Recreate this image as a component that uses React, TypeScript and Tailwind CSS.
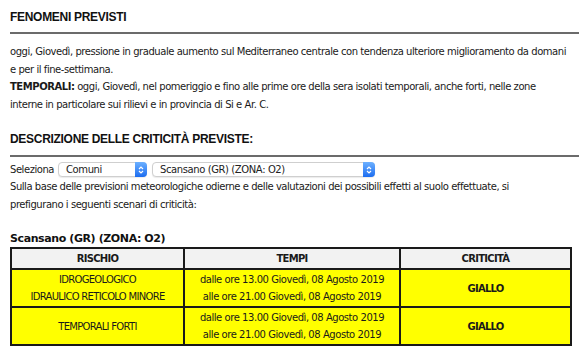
import React from "react";

const body = { fontFamily: '"DejaVu Sans", Verdana, sans-serif' };
const head = { fontFamily: '"Liberation Sans", Arial, sans-serif' };

function FakeSelect({ label, width }: { label: string; width: string }) {
  return (
    <div
      className={`flex h-[15px] items-center justify-between rounded-[4px] border border-[#cfcfcf] bg-white pl-[7px] shadow-[0_1px_1px_rgba(0,0,0,0.08)] ${width}`}
    >
      <span className="text-[10px] leading-none tracking-[-0.4px] text-[#222]">{label}</span>
      <span className="-mr-px flex h-[15px] w-[12px] items-center justify-center rounded-r-[4px] bg-gradient-to-b from-[#6cb0ff] to-[#1a6cf0]">
        <svg width="6" height="10" viewBox="0 0 6 10" fill="none" stroke="white" strokeWidth="1.2">
          <path d="M1 4 L3 2 L5 4" />
          <path d="M1 6 L3 8 L5 6" />
        </svg>
      </span>
    </div>
  );
}

const rows = [
  {
    rischio: ["IDROGEOLOGICO", "IDRAULICO RETICOLO MINORE"],
    tempi: ["dalle ore 13.00 Giovedì, 08 Agosto 2019", "alle ore 21.00 Giovedì, 08 Agosto 2019"],
    criticita: "GIALLO",
  },
  {
    rischio: ["TEMPORALI FORTI"],
    tempi: ["dalle ore 13.00 Giovedì, 08 Agosto 2019", "alle ore 21.00 Giovedì, 08 Agosto 2019"],
    criticita: "GIALLO",
  },
];

export default function App() {
  return (
    <div className="h-[350px] w-[579px] overflow-hidden bg-white pl-[10px] text-[#1a1a1a]" style={body}>
      <h2 className="pt-[9px] text-[12px] font-bold leading-[16px] tracking-[-0.3px] text-[#111]" style={head}>
        FENOMENI PREVISTI
      </h2>
      <div className="mt-[7px] h-[2px] bg-[#6b6b6b]" />
      <div className="mt-[9px] whitespace-nowrap text-[10px] leading-[17.5px] tracking-[-0.45px]">
        <p>
          oggi, Giovedì, pressione in graduale aumento sul Mediterraneo centrale con tendenza ulteriore miglioramento da domani
          <br />e per il fine-settimana.
        </p>
        <p>
          <b>TEMPORALI:</b> oggi, Giovedì, nel pomeriggio e fino alle prime ore della sera isolati temporali, anche forti, nelle zone
          <br />
          interne in particolare sui rilievi e in provincia di Si e Ar. C.
        </p>
      </div>

      <h2 className="mt-[18px] text-[12px] font-bold leading-[16px] tracking-[-0.3px] text-[#111]" style={head}>
        DESCRIZIONE DELLE CRITICITÀ PREVISTE:
      </h2>
      <div className="mt-[8px] h-[2px] bg-[#6b6b6b]" />
      <div className="mt-[5px] flex items-center text-[10px] tracking-[-0.45px]">
        <span>Seleziona</span>
        <FakeSelect label="Comuni" width="ml-[4px] w-[89px]" />
        <FakeSelect label="Scansano (GR) (ZONA: O2)" width="ml-[5px] w-[223px]" />
      </div>
      <p className="mt-px whitespace-nowrap text-[10px] leading-[17.5px] tracking-[-0.45px]">
        Sulla base delle previsioni meteorologiche odierne e delle valutazioni dei possibili effetti al suolo effettuate, si
        <br />
        prefigurano i seguenti scenari di criticità:
      </p>

      <h3 className="mt-[19px] text-[11px] font-bold leading-[14px] tracking-[-0.4px] text-[#111]">Scansano (GR) (ZONA: O2)</h3>
      <table className="mt-px w-[562px] border-collapse border-2 border-[#1a1a1a] text-center text-[10px] tracking-[-0.45px]">
        <thead>
          <tr className="bg-[#f2f2f2]">
            <th className="h-[21px] w-[173px] border-2 border-[#1a1a1a] p-0 font-bold tracking-[-0.7px]">RISCHIO</th>
            <th className="w-[216px] border-2 border-[#1a1a1a] p-0 font-bold tracking-[-0.7px]">TEMPI</th>
            <th className="border-2 border-[#1a1a1a] p-0 font-bold tracking-[-0.7px]">CRITICITÀ</th>
          </tr>
        </thead>
        <tbody>
          {rows.map((r, i) => (
            <tr key={i} className="bg-[#ffff00]">
              <td className="h-[38px] border-2 border-[#1a1a1a] p-0 leading-[17px] tracking-[-0.7px]">
                {r.rischio.map((t) => (
                  <div key={t}>{t}</div>
                ))}
              </td>
              <td className="border-2 border-[#1a1a1a] p-0 leading-[17px]">
                {r.tempi.map((t) => (
                  <div key={t}>{t}</div>
                ))}
              </td>
              <td className="border-2 border-[#1a1a1a] p-0 font-bold tracking-[-0.8px]">{r.criticita}</td>
            </tr>
          ))}
        </tbody>
      </table>
    </div>
  );
}
